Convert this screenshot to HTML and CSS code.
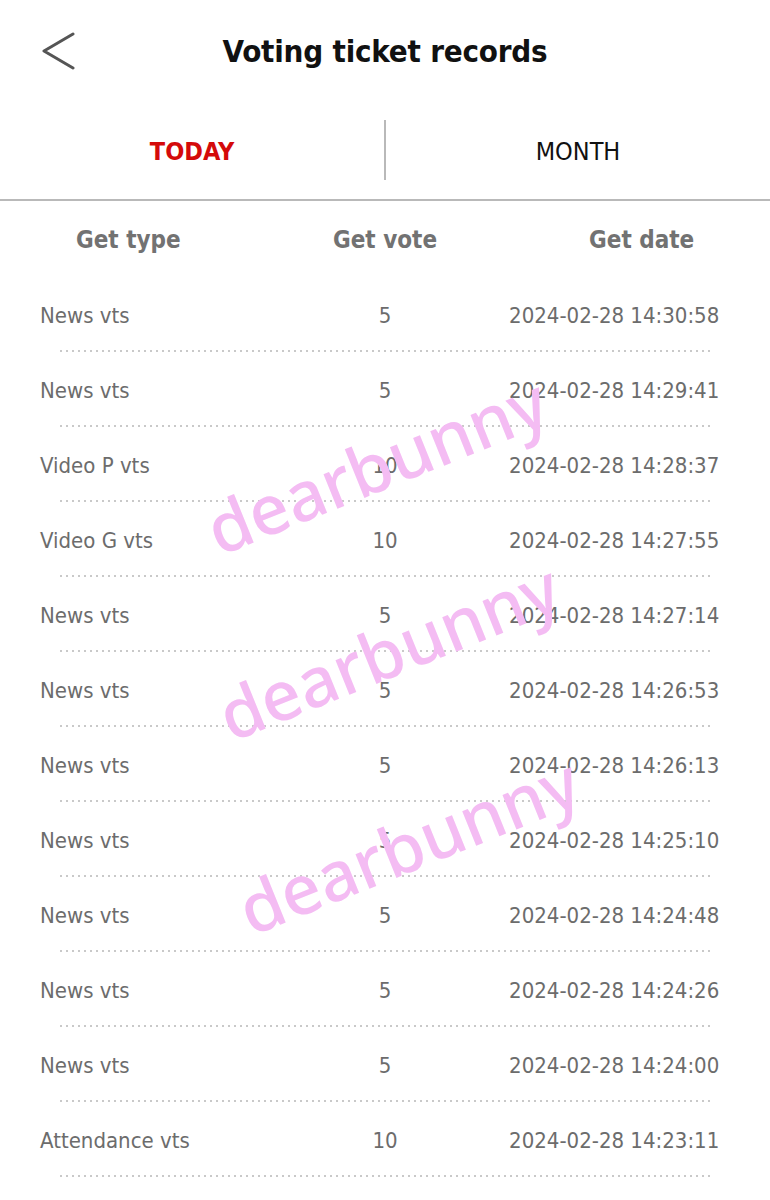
FILE: index.html
```html
<!DOCTYPE html>
<html lang="en">
<head>
    <meta charset="UTF-8">
    <meta name="viewport" content="width=device-width, initial-scale=1.0">
    <title>Voting ticket records</title>
    <link rel="stylesheet" href="styles.css">
</head>
<body>

    <div class="page">
        <header class="top-bar">
            <button class="back-btn" aria-label="Back">
                <svg width="40" height="40" viewBox="0 0 40 40">
                    <polyline points="33,4 4,21 33,38" fill="none" stroke="#555" stroke-width="3" stroke-linecap="round" stroke-linejoin="round"/>
                </svg>
            </button>
            <h1>Voting ticket records</h1>
        </header>

        <nav class="tabs">
            <div class="tab active">TODAY</div>
            <div class="tab-divider"></div>
            <div class="tab">MONTH</div>
        </nav>

        <div class="table-head">
            <div>Get type</div>
            <div>Get vote</div>
            <div>Get date</div>
        </div>

        <div class="records">
            <div class="record"><span class="type">News vts</span><span class="vote">5</span><span class="date">2024-02-28 14:30:58</span></div>
            <div class="record"><span class="type">News vts</span><span class="vote">5</span><span class="date">2024-02-28 14:29:41</span></div>
            <div class="record"><span class="type">Video P vts</span><span class="vote">10</span><span class="date">2024-02-28 14:28:37</span></div>
            <div class="record"><span class="type">Video G vts</span><span class="vote">10</span><span class="date">2024-02-28 14:27:55</span></div>
            <div class="record"><span class="type">News vts</span><span class="vote">5</span><span class="date">2024-02-28 14:27:14</span></div>
            <div class="record"><span class="type">News vts</span><span class="vote">5</span><span class="date">2024-02-28 14:26:53</span></div>
            <div class="record"><span class="type">News vts</span><span class="vote">5</span><span class="date">2024-02-28 14:26:13</span></div>
            <div class="record"><span class="type">News vts</span><span class="vote">5</span><span class="date">2024-02-28 14:25:10</span></div>
            <div class="record"><span class="type">News vts</span><span class="vote">5</span><span class="date">2024-02-28 14:24:48</span></div>
            <div class="record"><span class="type">News vts</span><span class="vote">5</span><span class="date">2024-02-28 14:24:26</span></div>
            <div class="record"><span class="type">News vts</span><span class="vote">5</span><span class="date">2024-02-28 14:24:00</span></div>
            <div class="record"><span class="type">Attendance vts</span><span class="vote">10</span><span class="date">2024-02-28 14:23:11</span></div>
        </div>

        <!-- watermark -->
        <div class="mark mark-1">dearbunny</div>
        <div class="mark mark-2">dearbunny</div>
        <div class="mark mark-3">dearbunny</div>
    </div>

</body>
</html>
```

FILE: styles.css
```css
:root {
    --text-dark: #111111;
    --text-gray: #6c6c6c;
    --head-gray: #727272;
    --accent-red: #d40a0a;
    --line-gray: #b9b9b9;
    --dot-gray: #c9c9c9;
    --mark-pink: #f4bcf3;
}

body {
    margin: 0;
    background: #ffffff;
    font-family: "DejaVu Sans Condensed", "DejaVu Sans", sans-serif;
    font-stretch: condensed;
    color: var(--text-dark);
}

.page {
    position: relative;
    width: 770px;
    height: 1200px;
    overflow: hidden;
}

/* Top bar */
.top-bar {
    height: 100px;
    display: flex;
    align-items: center;
    justify-content: center;
    position: relative;
}

.back-btn {
    position: absolute;
    left: 40px;
    top: 30px;
    padding: 0;
    border: none;
    background: none;
    width: 40px;
    height: 42px;
}

.top-bar h1 {
    margin: 0;
    margin-top: 2px;
    font-size: 31px;
    font-weight: bold;
    letter-spacing: -0.2px;
}

/* Tabs */
.tabs {
    height: 99px;
    display: flex;
    align-items: center;
    border-bottom: 2px solid var(--line-gray);
}

.tab {
    flex: 1;
    text-align: center;
    font-size: 25px;
    padding-top: 4px;
}

.tab.active {
    color: var(--accent-red);
    font-weight: bold;
}

.tab-divider {
    width: 2px;
    height: 60px;
    background: var(--line-gray);
}

/* Table */
.table-head {
    height: 77px;
    display: grid;
    grid-template-columns: 1fr 1fr 1fr;
    align-items: center;
    text-align: center;
    font-size: 24px;
    font-weight: bold;
    color: var(--head-gray);
}

.record {
    position: relative;
    height: 75px;
    display: grid;
    grid-template-columns: 1fr 1fr 1fr;
    align-items: center;
    margin: 0 60px;
    font-size: 22px;
    color: var(--text-gray);
}

.record::after {
    content: "";
    position: absolute;
    left: 0;
    right: 0;
    bottom: 1px;
    height: 2px;
    background: repeating-linear-gradient(to right, var(--dot-gray) 0 2px, transparent 2px 6px);
}

.record .type {
    margin-left: -20px;
    white-space: nowrap;
}

.record .vote {
    text-align: center;
}

.record .date {
    text-align: center;
    white-space: nowrap;
    margin-right: -25px;
}

/* Watermark */
.mark {
    position: absolute;
    font-family: "Noto Sans", "DejaVu Sans", sans-serif;
    font-weight: 500;
    font-size: 69px;
    color: var(--mark-pink);
    transform: translate(-50%, -50%) rotate(-22deg);
    white-space: nowrap;
    pointer-events: none;
}

.mark-1 { left: 376px; top: 464px; }
.mark-2 { left: 388px; top: 650px; }
.mark-3 { left: 408px; top: 844px; }
```
